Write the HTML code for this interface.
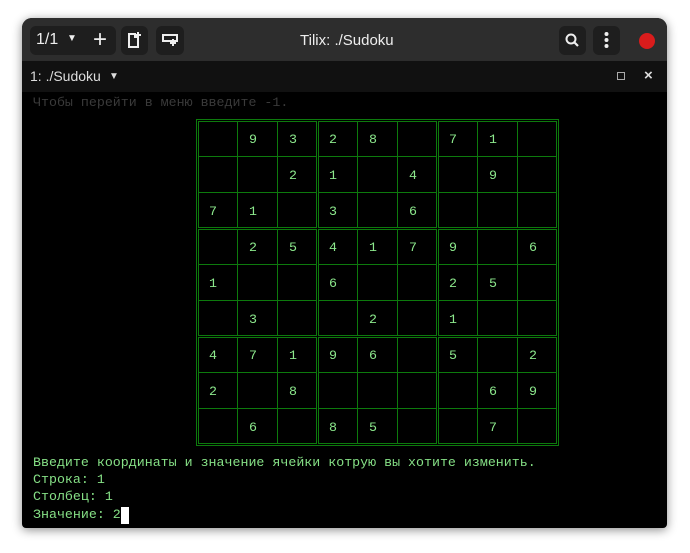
<!DOCTYPE html><html><head><style>
body{margin:0;width:690px;height:553px;background:#fff;position:relative;overflow:hidden;font-family:"Liberation Sans",sans-serif}
.win{position:absolute;left:22px;top:18px;width:645px;height:510px;border-radius:10px 10px 4px 4px;background:#000;overflow:hidden;box-shadow:0 2px 10px rgba(0,0,0,.45)}
.tb{position:absolute;left:0;top:0;width:645px;height:43px;background:#2d2d2d}
.btn{position:absolute;top:8px;height:29px;background:#1e1e1e;border-radius:6px;color:#eee}
.tab{position:absolute;left:0;top:43px;width:645px;height:31px;background:#111;color:#ddd;font-size:14px}
.mono{font-family:"Liberation Mono",monospace;font-size:13.3px;position:absolute;white-space:pre}
.g{color:#86e086}
</style></head><body>
<div class="win">
<div class="tb">
<div class="btn" style="left:8px;width:86px"><span style="position:absolute;left:6px;top:5px;font-size:16px">1/1</span><span style="position:absolute;left:37px;top:7px;font-size:10px">▼</span><span style="position:absolute;left:63px;top:0px;font-size:24px">+</span></div>
<div class="btn" style="left:99px;width:27px"><svg width="27" height="29"><path d="M8 8h6v3h3v10H8z" fill="none" stroke="#eee" stroke-width="2"/><path d="M17 6v6M14 9h6" stroke="#eee" stroke-width="2"/></svg></div>
<div class="btn" style="left:134px;width:28px"><svg width="28" height="29"><path d="M7 9h14v6H7z" fill="none" stroke="#eee" stroke-width="2"/><path d="M17 13v7M14 17h6" stroke="#eee" stroke-width="2"/></svg></div>
<div style="position:absolute;left:278px;top:14px;color:#eee;font-size:15px">Tilix: ./Sudoku</div>
<div class="btn" style="left:537px;width:27px"><svg width="27" height="29"><circle cx="12" cy="13" r="4.5" fill="none" stroke="#eee" stroke-width="2"/><path d="M15 16l4 4" stroke="#eee" stroke-width="2.2"/></svg></div>
<div class="btn" style="left:571px;width:27px"><svg width="27" height="29"><circle cx="13.5" cy="8" r="2" fill="#eee"/><circle cx="13.5" cy="14" r="2" fill="#eee"/><circle cx="13.5" cy="20" r="2" fill="#eee"/></svg></div>
<div style="position:absolute;left:617px;top:15px;width:16px;height:16px;border-radius:50%;background:#d91c1c"></div>
</div>
<div class="tab"><span style="position:absolute;left:8px;top:7px">1: ./Sudoku</span><span style="position:absolute;left:87px;top:10px;font-size:10px">▼</span>
<div style="position:absolute;left:595px;top:11px;width:6px;height:6px;border:1.5px solid #aaa"></div>
<span style="position:absolute;left:622px;top:6px;font-size:15px;font-weight:bold">×</span></div>
</div>
<div class="mono" style="left:33px;top:95px;color:#3a3a3a">Чтобы перейти в меню введите -1.</div>
<svg style="position:absolute;left:0;top:0" width="690" height="553">
<g fill="none" stroke="#0d7a0d" stroke-width="1">
<rect x="196.5" y="119.5" width="362" height="326"/>
<g id="b"><rect x="198.5" y="121.5" width="118" height="106"/><path d="M237.5 121v107M277.5 121v107M198 156.5h119M198 192.5h119"/></g>
<use href="#b" x="120"/><use href="#b" x="240"/>
<use href="#b" y="108"/><use href="#b" x="120" y="108"/><use href="#b" x="240" y="108"/>
<use href="#b" y="216"/><use href="#b" x="120" y="216"/><use href="#b" x="240" y="216"/>
</g>
<g font-family="Liberation Mono,monospace" font-size="13.3" fill="#8ce88c" text-anchor="middle">
<text x="253" y="143">9</text><text x="293" y="143">3</text><text x="333" y="143">2</text><text x="373" y="143">8</text><text x="453" y="143">7</text><text x="493" y="143">1</text>
<text x="293" y="179">2</text><text x="333" y="179">1</text><text x="413" y="179">4</text><text x="493" y="179">9</text>
<text x="213" y="215">7</text><text x="253" y="215">1</text><text x="333" y="215">3</text><text x="413" y="215">6</text>
<text x="253" y="251">2</text><text x="293" y="251">5</text><text x="333" y="251">4</text><text x="373" y="251">1</text><text x="413" y="251">7</text><text x="453" y="251">9</text><text x="533" y="251">6</text>
<text x="213" y="287">1</text><text x="333" y="287">6</text><text x="453" y="287">2</text><text x="493" y="287">5</text>
<text x="253" y="323">3</text><text x="373" y="323">2</text><text x="453" y="323">1</text>
<text x="213" y="359">4</text><text x="253" y="359">7</text><text x="293" y="359">1</text><text x="333" y="359">9</text><text x="373" y="359">6</text><text x="453" y="359">5</text><text x="533" y="359">2</text>
<text x="213" y="395">2</text><text x="293" y="395">8</text><text x="493" y="395">6</text><text x="533" y="395">9</text>
<text x="253" y="431">6</text><text x="333" y="431">8</text><text x="373" y="431">5</text><text x="493" y="431">7</text>
</g></svg>
<div class="mono g" style="left:33px;top:455px">Введите координаты и значение ячейки котрую вы хотите изменить.</div>
<div class="mono g" style="left:33px;top:472px">Строка: 1</div>
<div class="mono g" style="left:33px;top:489px">Столбец: 1</div>
<div class="mono g" style="left:33px;top:507px">Значение: 2</div>
<div style="position:absolute;left:121px;top:507px;width:8px;height:17px;background:#fff"></div>
</body></html>
